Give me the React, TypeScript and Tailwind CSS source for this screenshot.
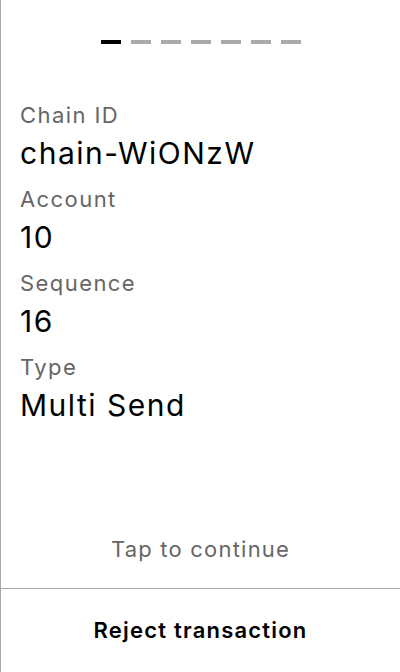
import React from 'react';

const fields = [
  { label: 'Chain ID', value: 'chain-WiONzW' },
  { label: 'Account', value: '10' },
  { label: 'Sequence', value: '16' },
  { label: 'Type', value: 'Multi Send' },
];

export default function App() {
  const steps = [0, 1, 2, 3, 4, 5, 6];
  return (
    <div
      className="h-[672px] w-[400px] bg-white border-l border-[#a8a8a8] flex flex-col"
      style={{ fontFamily: 'Inter, "Noto Sans", sans-serif' }}
    >
      {/* progress */}
      <div className="flex justify-center gap-[10px] pt-[40px]">
        {steps.map((i) => (
          <div key={i} className={`h-[4px] w-[20px] ${i === 0 ? 'bg-black' : 'bg-[#aaaaaa]'}`} />
        ))}
      </div>

      {/* details */}
      <div className="flex-1 pl-[19px] pt-[57px]">
        {fields.map((f) => (
          <div key={f.label} className="mb-[7px]">
            <div className="text-[22px] leading-[28px] tracking-[0.065em] text-[#666666]">{f.label}</div>
            <div className="text-[30px] leading-[49px] tracking-[0.05em] text-black">{f.value}</div>
          </div>
        ))}
      </div>

      <div className="text-center text-[22px] leading-[28px] tracking-[0.055em] text-[#666666] pb-[25px]">
        Tap to continue
      </div>

      <div className="border-t border-[#a8a8a8] h-[84px] flex items-center justify-center">
        <span className="text-[22px] font-semibold tracking-[0.055em] text-black">Reject transaction</span>
      </div>
    </div>
  );
}
